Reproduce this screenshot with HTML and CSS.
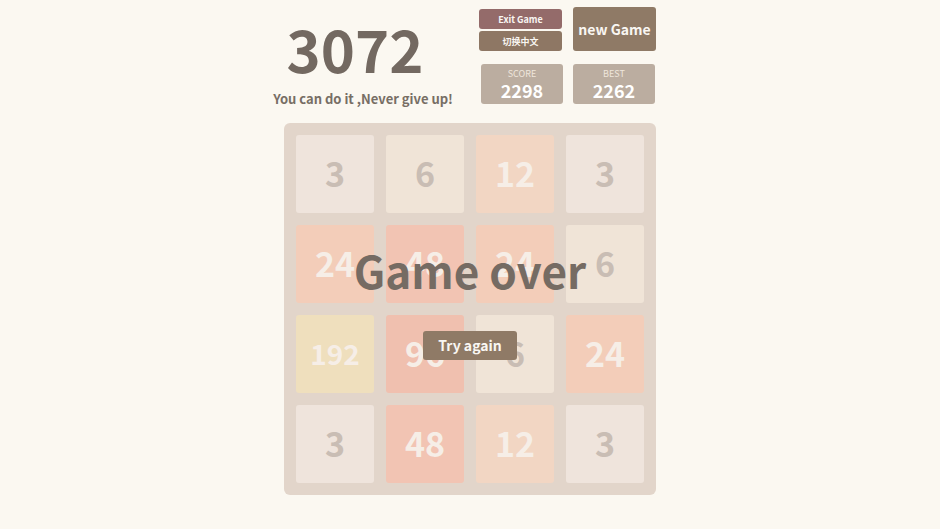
FILE: index.html
```html
<!DOCTYPE html>
<html lang="en">
<head>
    <meta charset="UTF-8">
    <title>3072</title>
    <link rel="stylesheet" href="styles.css">
</head>
<body>

<div class="container">
    <div class="heading">
        <div class="title-box">
            <h1 class="title">3072</h1>
            <p class="slogan">You can do it ,Never give up!</p>
        </div>
        <div class="controls">
            <div class="small-buttons">
                <button class="btn btn-exit">Exit Game</button>
                <button class="btn btn-lang">切换中文</button>
            </div>
            <button class="btn btn-new">new Game</button>
            <div class="score-box score-first">
                <span class="score-label">SCORE</span>
                <span class="score-value">2298</span>
            </div>
            <div class="score-box">
                <span class="score-label">BEST</span>
                <span class="score-value">2262</span>
            </div>
        </div>
    </div>

    <div class="board">
        <div class="grid">
            <div class="tile tile-3">3</div>
            <div class="tile tile-6">6</div>
            <div class="tile tile-12">12</div>
            <div class="tile tile-3">3</div>

            <div class="tile tile-24">24</div>
            <div class="tile tile-48">48</div>
            <div class="tile tile-24">24</div>
            <div class="tile tile-6">6</div>

            <div class="tile tile-192">192</div>
            <div class="tile tile-96">96</div>
            <div class="tile tile-6">6</div>
            <div class="tile tile-24">24</div>

            <div class="tile tile-3">3</div>
            <div class="tile tile-48">48</div>
            <div class="tile tile-12">12</div>
            <div class="tile tile-3">3</div>
        </div>

        <div class="game-message">
            <p class="message-text">Game over</p>
            <button class="btn btn-retry">Try again</button>
        </div>
    </div>
</div>

</body>
</html>
```

FILE: styles.css
```css
body {
    margin: 0;
    background: #fbf8f1;
    font-family: "Noto Sans CJK SC", "Noto Sans", sans-serif;
    color: #776e65;
}
.container {
    width: 372px;
    margin: 0 auto;
    padding-top: 7px;
}
.heading {
    display: flex;
    height: 97px;
    margin-bottom: 19px;
}
.title-box {
    flex: 1;
    margin-left: -20px;
    padding-right: 17px;
    text-align: center;
    white-space: nowrap;
}
.title {
    margin: 0;
    padding-right: 16px;
    font-size: 58px;
    line-height: 82px;
    font-weight: 700;
    color: #736961;
}
.slogan {
    margin: 0;
    font-size: 13px;
    line-height: 20px;
    font-weight: 700;
    color: #776e65;
}
.controls {
    display: grid;
    grid-template-columns: 83px 83px;
    grid-template-rows: 44px 40px;
    column-gap: 11px;
    row-gap: 13px;
}
.btn {
    border: none;
    border-radius: 3px;
    color: #f9f6f2;
    font-family: inherit;
    font-weight: 700;
    padding: 0;
    cursor: pointer;
}
.small-buttons {
    display: flex;
    flex-direction: column;
    gap: 2px;
    margin-top: 2px;
}
.btn-exit {
    height: 20px;
    background: #946b6a;
    font-size: 9px;
}
.btn-lang {
    height: 20px;
    background: #8e7764;
    font-size: 9px;
}
.btn-new {
    background: #8f7a66;
    font-size: 14px;
}
.score-box {
    width: 82px;
    background: #bbada0;
    border-radius: 3px;
    display: flex;
    flex-direction: column;
    align-items: center;
    justify-content: center;
    padding-top: 1px;
    box-sizing: border-box;
    color: #fff;
}
.score-first {
    margin-left: 2px;
}
.score-label {
    font-size: 9px;
    line-height: 11px;
    color: #efe6dc;
}
.score-value {
    font-size: 18px;
    line-height: 22px;
    font-weight: 700;
}
.board {
    position: relative;
    width: 348px;
    padding: 12px;
    background: #e2d5ca;
    border-radius: 6px;
}
.grid {
    display: grid;
    grid-template-columns: repeat(4, 78px);
    grid-auto-rows: 78px;
    gap: 12px;
}
.tile {
    border-radius: 3px;
    display: flex;
    align-items: center;
    justify-content: center;
    padding-bottom: 3px;
    box-sizing: border-box;
    font-size: 34px;
    font-weight: 700;
    color: #f6eee7;
}
.tile-3 { background: #efe4dc; color: #c9bdb4; }
.tile-6 { background: #f0e4d7; color: #c9bdb4; }
.tile-12 { background: #f2d6c3; }
.tile-24 { background: #f3cdb9; }
.tile-48 { background: #f2c4b3; }
.tile-96 { background: #f0c0af; }
.tile-192 { background: #efdfbd; font-size: 28px; }
.game-message {
    position: absolute;
    inset: 0;
    display: flex;
    flex-direction: column;
    align-items: center;
    justify-content: center;
    padding-bottom: 16px;
}
.message-text {
    margin: 0 0 34px;
    font-size: 44px;
    line-height: 54px;
    font-weight: 700;
    color: #756b63;
}
.btn-retry {
    width: 94px;
    height: 29px;
    background: #8f7a66;
    font-size: 14px;
}
```
